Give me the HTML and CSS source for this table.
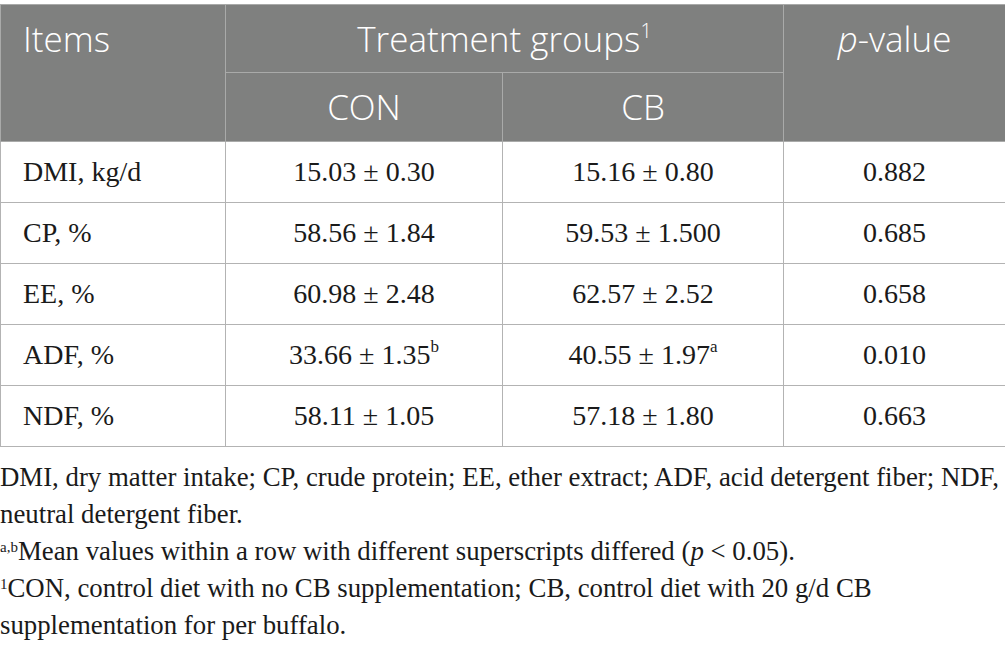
FILE: index.html
```html
<!DOCTYPE html>
<html>
<head>
<meta charset="utf-8">
<link rel="stylesheet" href="styles.css">
</head>
<body>
<div class="page">
  <table class="data">
    <colgroup>
      <col class="c1"><col class="c2"><col class="c3"><col class="c4">
    </colgroup>
    <thead>
      <tr class="h1">
        <th rowspan="2" class="items">Items</th>
        <th colspan="2">Treatment groups<sup>1</sup></th>
        <th rowspan="2" class="pval"><i>p</i>-value</th>
      </tr>
      <tr class="h2">
        <th>CON</th>
        <th>CB</th>
      </tr>
    </thead>
    <tbody>
      <tr><td class="lab">DMI, kg/d</td><td>15.03 ± 0.30</td><td>15.16 ± 0.80</td><td>0.882</td></tr>
      <tr><td class="lab">CP, %</td><td>58.56 ± 1.84</td><td>59.53 ± 1.500</td><td>0.685</td></tr>
      <tr><td class="lab">EE, %</td><td>60.98 ± 2.48</td><td>62.57 ± 2.52</td><td>0.658</td></tr>
      <tr><td class="lab">ADF, %</td><td>33.66 ± 1.35<sup>b</sup></td><td>40.55 ± 1.97<sup>a</sup></td><td>0.010</td></tr>
      <tr><td class="lab">NDF, %</td><td>58.11 ± 1.05</td><td>57.18 ± 1.80</td><td>0.663</td></tr>
    </tbody>
  </table>
  <div class="notes">
    <p>DMI, dry matter intake; CP, crude protein; EE, ether extract; ADF, acid detergent fiber; NDF, neutral detergent fiber.</p>
    <p><sup>a,b</sup>Mean values within a row with different superscripts differed (<i>p</i> &lt; 0.05).</p>
    <p><sup>1</sup>CON, control diet with no CB supplementation; CB, control diet with 20 g/d CB supplementation for per buffalo.</p>
  </div>
</div>
</body>
</html>
```
FILE: styles.css
```css
html, body {
  margin: 0;
  padding: 0;
  background: #ffffff;
}
.page {
  padding-top: 4px;
  width: 1005px;
}
.data {
  border-collapse: collapse;
  table-layout: fixed;
  width: 1005px;
}
.c1 { width: 225px; }
.c2 { width: 277px; }
.c3 { width: 281px; }
.c4 { width: 222px; }
.data th {
  background: #7f807f;
  color: #ffffff;
  font-family: "Open Sans", "DejaVu Sans", sans-serif;
  font-weight: 350;
  font-size: 35px;
  border: 1px solid #a9aaa9;
  padding: 0;
  text-align: center;
  vertical-align: middle;
  line-height: 40px;
}
.data thead tr.h1 th { height: 67px; }
.data thead tr.h2 th { height: 68px; }
.data th.items, .data th.pval {
  vertical-align: top;
  padding-top: 14px;
}
.data th.items {
  text-align: left;
  padding-left: 22px;
}
.data th sup {
  font-size: 20px;
  line-height: 0;
  vertical-align: 14px;
}
.data td {
  font-family: "Liberation Serif", "Times New Roman", serif;
  font-size: 28px;
  color: #1a1a1a;
  border: 1px solid #b3b3b3;
  height: 60px;
  padding: 0;
  text-align: center;
  vertical-align: middle;
}
.data td.lab {
  text-align: left;
  padding-left: 22px;
}
.data td sup {
  font-size: 17px;
  line-height: 0;
  vertical-align: 12px;
}
.notes {
  font-family: "Liberation Serif", "Times New Roman", serif;
  font-size: 26.8px;
  color: #1a1a1a;
  line-height: 37px;
  padding-top: 12px;
}
.notes p {
  margin: 0;
}
.notes sup {
  font-size: 15px;
  line-height: 0;
  vertical-align: 8px;
}
```
